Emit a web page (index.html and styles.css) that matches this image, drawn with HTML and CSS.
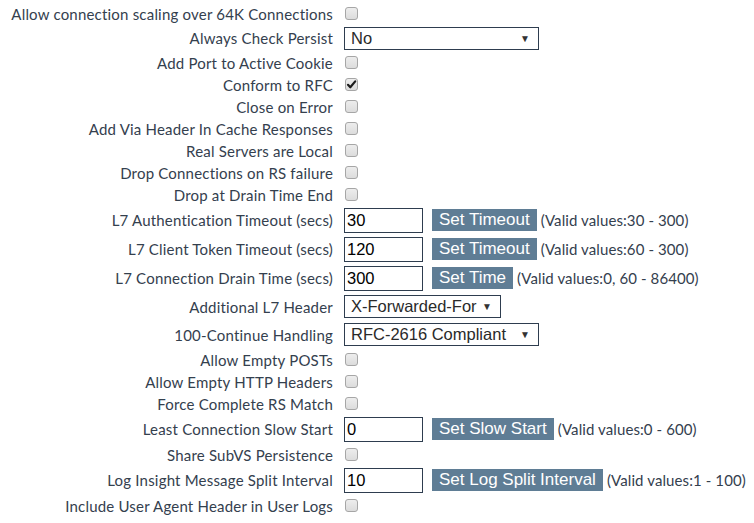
FILE: index.html
```html
<!DOCTYPE html>
<html>
<head>
<meta charset="utf-8">
<link rel="stylesheet" href="styles.css">
</head>
<body>
<div class="form">
  <div class="row r-cb"><span class="lbl">Allow connection scaling over 64K Connections</span><span class="ctl"><span class="cb"></span></span></div>
  <div class="row r-sel first"><span class="lbl">Always Check Persist</span><span class="ctl"><span class="sel w195"><span class="val">No</span><span class="arr">&#9660;</span></span></span></div>
  <div class="row r-cb"><span class="lbl">Add Port to Active Cookie</span><span class="ctl"><span class="cb"></span></span></div>
  <div class="row r-cb"><span class="lbl">Conform to RFC</span><span class="ctl"><span class="cb on"><svg viewBox="0 0 13 13" width="13" height="13"><path d="M3 6.8 L5.3 9.3 L10.2 3.4" fill="none" stroke="#1c1c1c" stroke-width="2.2" stroke-linecap="round" stroke-linejoin="round"/></svg></span></span></div>
  <div class="row r-cb"><span class="lbl">Close on Error</span><span class="ctl"><span class="cb"></span></span></div>
  <div class="row r-cb"><span class="lbl">Add Via Header In Cache Responses</span><span class="ctl"><span class="cb"></span></span></div>
  <div class="row r-cb"><span class="lbl">Real Servers are Local</span><span class="ctl"><span class="cb"></span></span></div>
  <div class="row r-cb"><span class="lbl">Drop Connections on RS failure</span><span class="ctl"><span class="cb"></span></span></div>
  <div class="row r-cb"><span class="lbl">Drop at Drain Time End</span><span class="ctl"><span class="cb"></span></span></div>
  <div class="row r-in"><span class="lbl">L7 Authentication Timeout (secs)</span><span class="ctl"><span class="inp">30</span><span class="btn">Set Timeout</span><span class="hint">(Valid values:30 - 300)</span></span></div>
  <div class="row r-in"><span class="lbl">L7 Client Token Timeout (secs)</span><span class="ctl"><span class="inp">120</span><span class="btn">Set Timeout</span><span class="hint">(Valid values:60 - 300)</span></span></div>
  <div class="row r-in"><span class="lbl">L7 Connection Drain Time (secs)</span><span class="ctl"><span class="inp">300</span><span class="btn">Set Time</span><span class="hint">(Valid values:0, 60 - 86400)</span></span></div>
  <div class="row r-sel"><span class="lbl">Additional L7 Header</span><span class="ctl"><span class="sel w157"><span class="val">X-Forwarded-For</span><span class="arr">&#9660;</span></span></span></div>
  <div class="row r-sel"><span class="lbl">100-Continue Handling</span><span class="ctl"><span class="sel w195"><span class="val">RFC-2616 Compliant</span><span class="arr">&#9660;</span></span></span></div>
  <div class="row r-cb"><span class="lbl">Allow Empty POSTs</span><span class="ctl"><span class="cb"></span></span></div>
  <div class="row r-cb"><span class="lbl">Allow Empty HTTP Headers</span><span class="ctl"><span class="cb"></span></span></div>
  <div class="row r-cb"><span class="lbl">Force Complete RS Match</span><span class="ctl"><span class="cb"></span></span></div>
  <div class="row r-in"><span class="lbl">Least Connection Slow Start</span><span class="ctl"><span class="inp">0</span><span class="btn">Set Slow Start</span><span class="hint">(Valid values:0 - 600)</span></span></div>
  <div class="row r-cb"><span class="lbl">Share SubVS Persistence</span><span class="ctl"><span class="cb"></span></span></div>
  <div class="row r-in"><span class="lbl">Log Insight Message Split Interval</span><span class="ctl"><span class="inp">10</span><span class="btn">Set Log Split Interval</span><span class="hint">(Valid values:1 - 100)</span></span></div>
  <div class="row r-cb"><span class="lbl">Include User Agent Header in User Logs</span><span class="ctl"><span class="cb"></span></span></div>
</div>
</body>
</html>
```
FILE: styles.css
```css
html, body {
  margin: 0;
  padding: 0;
  background: #ffffff;
}
body {
  font-family: "Lato", "Open Sans", sans-serif;
  font-size: 15px;
  letter-spacing: 0.2px;
  font-variant-ligatures: none;
  color: #34404e;
}
.form {
  padding-top: 2.5px;
  display: flex;
  flex-direction: column;
}
.row {
  display: grid;
  grid-template-columns: 333px 1fr;
  column-gap: 11px;
  align-items: center;
}
.r-cb { height: 22px; }
.r-sel { height: 28px; }
.r-sel.first { height: 27px; }
.r-in { height: 29px; }
.lbl {
  text-align: right;
  white-space: nowrap;
}
.ctl {
  display: flex;
  align-items: center;
}
.cb {
  box-sizing: border-box;
  width: 13px;
  height: 13px;
  margin-left: 1px;
  border: 1px solid #a6a6a6;
  border-radius: 3px;
  background: linear-gradient(#ededed, #dcdcdc);
  display: flex;
  align-items: center;
  justify-content: center;
}
.cb svg {
  display: block;
  margin: -1px;
}
.sel {
  box-sizing: border-box;
  height: 23px;
  border: 1px solid #2e3d4f;
  display: flex;
  align-items: center;
  justify-content: space-between;
  padding: 0 8px 0 6px;
  font-family: "Liberation Sans", Arial, sans-serif;
  font-size: 16.5px;
  letter-spacing: 0;
  color: #2a2a2a;
}
.w195 { width: 195px; }
.w157 { width: 157px; }
.arr {
  font-size: 10px;
  color: #333;
}
.inp {
  box-sizing: border-box;
  width: 79px;
  height: 25px;
  border: 1px solid #2e3d4f;
  padding: 0 2px;
  display: flex;
  align-items: center;
  font-family: "Liberation Sans", Arial, sans-serif;
  font-size: 16.5px;
  letter-spacing: 0;
  color: #000;
}
.btn {
  margin-left: 9px;
  height: 22px;
  padding: 0 7px;
  background: #5f7d95;
  color: #ffffff;
  display: flex;
  align-items: center;
  font-family: "Liberation Sans", Arial, sans-serif;
  font-size: 17px;
  letter-spacing: 0;
  white-space: nowrap;
}
.hint {
  margin-left: 4px;
  letter-spacing: 0.1px;
  white-space: nowrap;
}
```
